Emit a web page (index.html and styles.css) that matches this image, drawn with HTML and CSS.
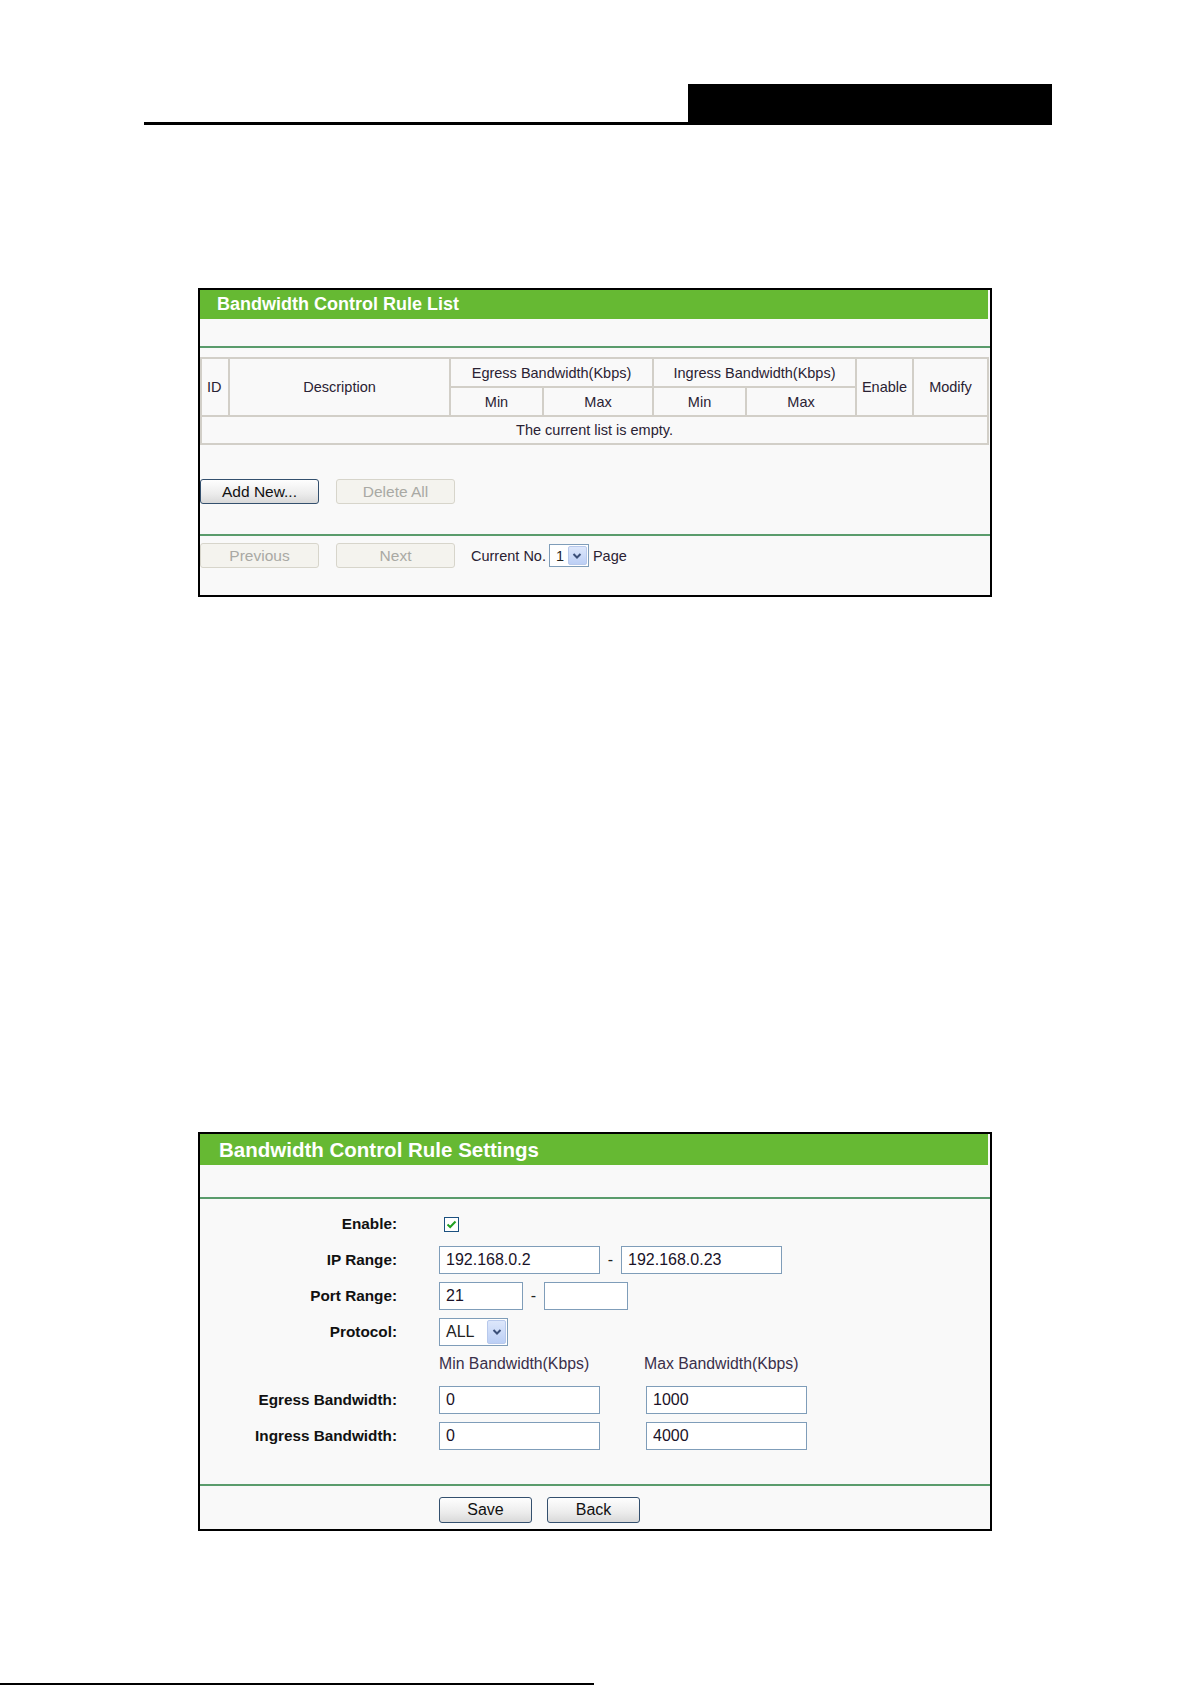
FILE: index.html
```html
<!DOCTYPE html>
<html lang="en">
<head>
    <meta charset="UTF-8">
    <meta name="viewport" content="width=device-width, initial-scale=1.0">
    <title>Bandwidth Control</title>
    <link rel="stylesheet" href="styles.css">
</head>
<body>
    <div class="page-head"><div class="head-box"></div></div>

    <div class="panel panel-list">
        <div class="panel-title">Bandwidth Control Rule List</div>
        <div class="panel-gap"></div>
        <div class="rule-line"></div>
        <table class="rule-table">
            <colgroup>
                <col style="width:28px"><col style="width:221px">
                <col style="width:93px"><col style="width:110px">
                <col style="width:93px"><col style="width:110px">
                <col style="width:57px"><col style="width:75px">
            </colgroup>
            <tr class="row-top">
                <td rowspan="2" class="col-id">ID</td>
                <td rowspan="2">Description</td>
                <td colspan="2">Egress Bandwidth(Kbps)</td>
                <td colspan="2">Ingress Bandwidth(Kbps)</td>
                <td rowspan="2">Enable</td>
                <td rowspan="2">Modify</td>
            </tr>
            <tr class="row-sub">
                <td>Min</td>
                <td>Max</td>
                <td>Min</td>
                <td>Max</td>
            </tr>
            <tr class="row-empty">
                <td colspan="8">The current list is empty.</td>
            </tr>
        </table>
        <div class="btn-row add-row">
            <button class="btn">Add New...</button>
            <button class="btn" disabled>Delete All</button>
        </div>
        <div class="rule-line"></div>
        <div class="btn-row page-row">
            <button class="btn" disabled>Previous</button>
            <button class="btn" disabled>Next</button>
            <span class="page-text">Current No.</span>
            <span class="select select-page">
                <span class="select-value">1</span>
                <span class="select-arrow"><svg width="10" height="8" viewBox="0 0 10 8"><path d="M1.5 2 L5 5.5 L8.5 2" fill="none" stroke="#3b4f78" stroke-width="2"/></svg></span>
            </span>
            <span class="page-text">Page</span>
        </div>
    </div>

    <div class="panel panel-settings">
        <div class="panel-title">Bandwidth Control Rule Settings</div>
        <div class="panel-gap"></div>
        <div class="rule-line"></div>
        <div class="form">
            <div class="form-row">
                <span class="form-label">Enable:</span>
                <span class="checkbox"><svg width="15" height="15" viewBox="0 0 15 15"><rect x="0.5" y="0.5" width="14" height="14" fill="#fff" stroke="#1c5180"/><path d="M3.5 7.5 L6.2 10 L11.5 4.5" fill="none" stroke="#21a121" stroke-width="2"/></svg></span>
            </div>
            <div class="form-row">
                <span class="form-label">IP Range:</span>
                <input class="field field-wide" type="text" value="192.168.0.2">
                <span class="dash">-</span>
                <input class="field field-wide" type="text" value="192.168.0.23">
            </div>
            <div class="form-row">
                <span class="form-label">Port Range:</span>
                <input class="field field-port" type="text" value="21">
                <span class="dash">-</span>
                <input class="field field-port" type="text" value="">
            </div>
            <div class="form-row">
                <span class="form-label">Protocol:</span>
                <span class="select select-proto">
                    <span class="select-value">ALL</span>
                    <span class="select-arrow"><svg width="10" height="8" viewBox="0 0 10 8"><path d="M1.5 2 L5 5.5 L8.5 2" fill="none" stroke="#3b4f78" stroke-width="2"/></svg></span>
                </span>
            </div>
            <div class="form-row row-caption">
                <span class="form-label"></span>
                <span class="caption">Min Bandwidth(Kbps)</span>
                <span class="caption caption-max">Max Bandwidth(Kbps)</span>
            </div>
            <div class="form-row">
                <span class="form-label">Egress Bandwidth:</span>
                <input class="field field-wide bw-min" type="text" value="0">
                <input class="field field-wide" type="text" value="1000">
            </div>
            <div class="form-row">
                <span class="form-label">Ingress Bandwidth:</span>
                <input class="field field-wide bw-min" type="text" value="0">
                <input class="field field-wide" type="text" value="4000">
            </div>
        </div>
        <div class="rule-line"></div>
        <div class="btn-row save-row">
            <button class="btn btn-small">Save</button>
            <button class="btn btn-small">Back</button>
        </div>
    </div>

    <div class="page-foot"></div>
</body>
</html>
```

FILE: styles.css
```css
body{
    margin: 0;
    background-color: #fff;
    font-family: "Liberation Sans", Arial, sans-serif;
    color: #222;
}
.page-head{
    margin: 84px 0 0 144px;
    width: 908px;
    height: 38px;
    border-bottom: 3px solid #000;
    display: flex;
    justify-content: flex-end;
}
.head-box{
    width: 364px;
    height: 38px;
    background-color: #000;
}

.panel{
    box-sizing: border-box;
    width: 794px;
    margin-left: 198px;
    border: 2px solid #000;
    background-color: #f9f9f9;
}
.panel-list{
    margin-top: 163px;
}
.panel-settings{
    margin-top: 535px;
}
.panel-title{
    background-color: #66b933;
    color: #fff;
    font-weight: bold;
    font-size: 18px;
    height: 29px;
    line-height: 29px;
    padding-left: 17px;
    margin-right: 2px;
}
.panel-gap{
    height: 27px;
}
.panel-settings .panel-title{
    font-size: 20.5px;
    height: 31px;
    line-height: 31px;
    padding-left: 19px;
}
.panel-settings .panel-gap{
    height: 32px;
}
.rule-line{
    height: 2px;
    background-color: #5a9c6c;
}

.rule-table{
    table-layout: fixed;
    width: 787px;
    margin-top: 9px;
    border-collapse: collapse;
    font-size: 14.5px;
    color: #2a2233;
}
.rule-table td{
    border: 2px solid #d2cfc8;
    text-align: center;
    padding: 0;
}
.rule-table .col-id{
    text-align: left;
    padding-left: 5px;
}
.row-top td{
    height: 27px;
}
.row-sub td{
    height: 27px;
}
.row-empty td{
    height: 26px;
}

.btn-row{
    display: flex;
    align-items: center;
    gap: 17px;
}
.add-row{
    margin: 34px 0 30px;
}
.page-row{
    margin: 7px 0 27px;
}
.btn{
    box-sizing: border-box;
    width: 119px;
    height: 25px;
    padding: 0;
    font-family: "Liberation Sans", Arial, sans-serif;
    font-size: 15.5px;
    color: #111;
    border: 1px solid #34506e;
    border-radius: 3px;
    background: linear-gradient(#fefefe, #ececec 60%, #d9d9d9);
}
.btn:disabled{
    color: #a9a9a4;
    border-color: #d7d5cb;
    background: #f4f3ee;
}
.page-text{
    font-size: 14.5px;
    color: #2a2233;
}
.page-row .page-text:first-of-type{
    margin-left: -1px;
    margin-right: -14px;
}
.page-row .page-text:last-of-type{
    margin-left: -13px;
}

.select{
    box-sizing: border-box;
    display: flex;
    align-items: center;
    justify-content: space-between;
    border: 1px solid #7f9db9;
    background-color: #fff;
    padding: 1px;
}
.select-page{
    width: 40px;
    height: 23px;
    font-size: 14.5px;
}
.select-proto{
    width: 69px;
    height: 28px;
    font-size: 16px;
}
.select-value{
    padding-left: 5px;
}
.select-arrow{
    align-self: stretch;
    width: 17px;
    display: flex;
    align-items: center;
    justify-content: center;
    border: 1px solid #b8c9ec;
    border-radius: 2px;
    background: linear-gradient(#dde7fb, #bccff5);
}

.form{
    padding: 11px 0 34px;
    display: flex;
    flex-direction: column;
    gap: 8px;
}
.form-row{
    display: flex;
    align-items: center;
    height: 28px;
}
.row-caption{
    height: 24px;
    align-items: flex-start;
}
.form-label{
    width: 197px;
    margin-right: 42px;
    text-align: right;
    font-weight: bold;
    font-size: 15.3px;
    color: #111;
}
.checkbox{
    display: flex;
    margin-left: 5px;
}
.field{
    box-sizing: border-box;
    height: 28px;
    padding: 0 6px;
    border: 1px solid #7f9db9;
    background-color: #fff;
    font-family: "Liberation Sans", Arial, sans-serif;
    font-size: 16px;
    color: #1a1228;
}
.field-wide{
    width: 161px;
}
.field-port{
    width: 84px;
}
.dash{
    width: 21px;
    text-align: center;
    font-size: 16px;
}
.bw-min{
    margin-right: 46px;
}
.caption{
    width: 207px;
    font-size: 15.8px;
    line-height: 20px;
    color: #3a2f4a;
}
.caption-max{
    margin-left: -2px;
}

.save-row{
    padding: 11px 0 6px 239px;
    gap: 15px;
}
.btn-small{
    width: 93px;
    height: 26px;
    font-size: 16px;
}

.page-foot{
    margin-top: 152px;
    width: 594px;
    height: 2px;
    background-color: #000;
}
```
